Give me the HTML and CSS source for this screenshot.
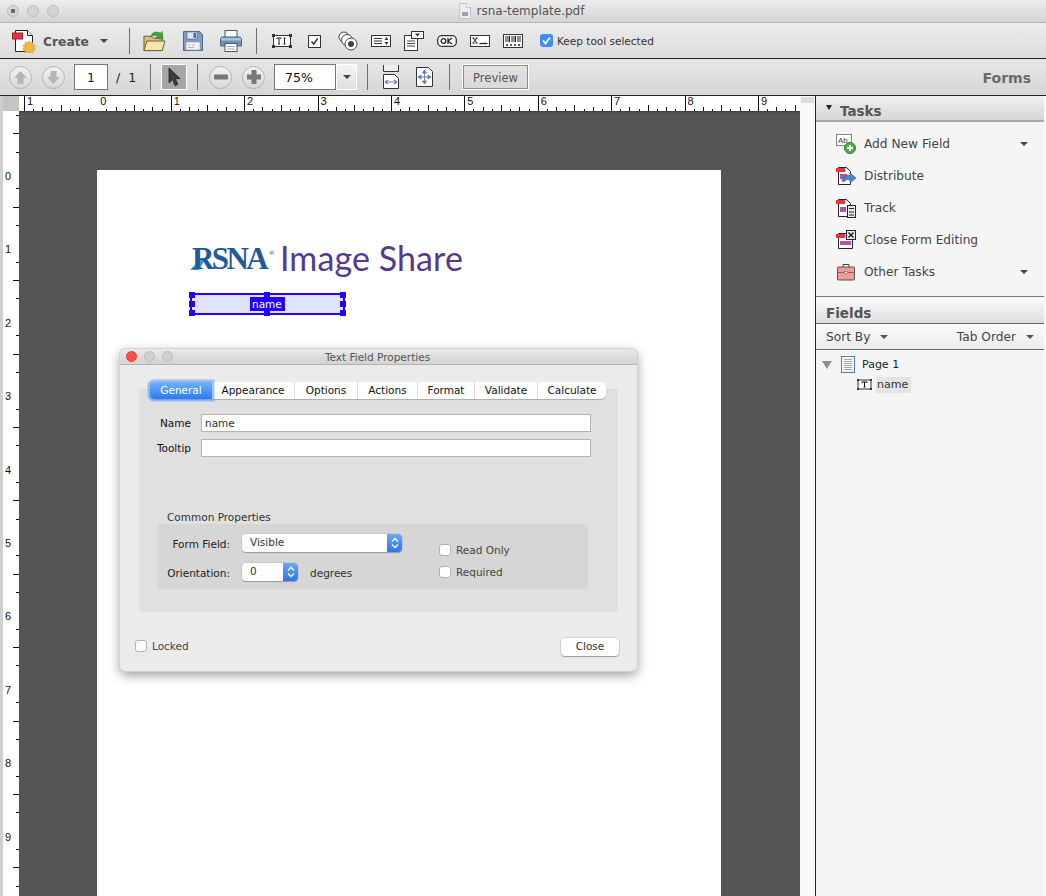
FILE: index.html
```html
<!DOCTYPE html>
<html lang="en">

<head>
    <meta charset="UTF-8">
    <title>rsna-template.pdf</title>
    <link rel="stylesheet" href="styles.css">
</head>

<body>
    <header class="titlebar">
        <div class="lights">
            <span class="light light-active"></span>
            <span class="light"></span>
            <span class="light"></span>
        </div>
        <div class="doc-title">
            <svg width="12" height="16" viewBox="0 0 12 16"><path d="M.5.5h7l4 4v11H.5z" fill="#eee" stroke="#c4c4c4"/><path d="M7.5.5v4h4" fill="#fff" stroke="#c4c4c4"/><rect x="3" y="9" width="6" height="4" fill="#9aa3b8"/></svg>
            <span>rsna-template.pdf</span>
        </div>
        <div class="lights"></div>
    </header>

    <div class="toolbar toolbar-top">
        <svg class="icon-create" width="24" height="24" viewBox="0 0 24 24">
            <path d="M3.5 1.5h12l5 5v16h-17z" fill="#fff" stroke="#222"/>
            <path d="M15.5 1.5v5h5" fill="#eee" stroke="#222"/>
            <rect x="0.5" y="4" width="10" height="6" fill="#e8343f" stroke="#a51c25"/>
            <path d="M17 12l1.4 2 2.400-.8.2 2.500 2.400.9-1.500 2 1.500 2-2.400.9-.2 2.300-2.400-.8-1.400 1-1.400-1-2.400.8-.2-2.300-2.400-.9 1.500-2-1.500-2 2.400-.9.2-2.500 2.400.8z" fill="#f0b93a" stroke="#b88a1e" stroke-width=".5"/>
        </svg>
        <span class="create-label">Create</span>
        <span class="caret caret-create"></span>
        <span class="sep sep-create"></span>
        <div class="file-tools">
            <svg width="23" height="24" viewBox="0 0 24 24">
                <path d="M1 7h8l2 2h9v13H1z" fill="#d9bf78" stroke="#6b5a2a"/>
                <path d="M1 22l3-10h19l-3 10z" fill="#f3e3ae" stroke="#6b5a2a"/>
                <path d="M8 8c1-5 6-7 10-4l2-2 1 8-8-1 2-2c-2-2-5-1-7 1z" fill="#45a03c" stroke="#2c6e28" stroke-width=".6"/>
            </svg>
            <svg width="20" height="24" viewBox="0 0 20 24">
                <path d="M.5 2.500h16l3 3v16H.500z" fill="#7d9cc4" stroke="#4c6a94"/>
                <rect x="4" y="3" width="10" height="7" fill="#dfe7f2" stroke="#4c6a94" stroke-width=".6"/>
                <rect x="10.500" y="4" width="2.500" height="5" fill="#4c6a94"/>
                <rect x="3" y="13" width="14" height="8" fill="#f3f3f3" stroke="#8a9ab0" stroke-width=".6"/>
                <path d="M5 16h3M9 16h3M5 18.500h6" stroke="#b5b5b5"/>
            </svg>
            <svg width="22" height="24" viewBox="0 0 22 24">
                <rect x="5" y="1.500" width="12" height="8" fill="#fafafa" stroke="#555"/>
                <path d="M3 8h16c2 0 2.500 1 2.500 3v6h-21v-6c0-2 .5-3 2.500-3z" fill="#6f93b8" stroke="#456a90"/>
                <rect x="1" y="9" width="20" height="2.500" fill="#a9c3dc"/>
                <rect x="5" y="14.500" width="12" height="8" fill="#fff" stroke="#555"/>
                <path d="M7 17.500h8M7 20h8" stroke="#aaa"/>
            </svg>
        </div>
        <span class="sep sep-file"></span>
        <div class="form-tools">
            <svg width="20" height="16" viewBox="0 0 20 16"><rect x="1.500" y="2.500" width="17" height="11" fill="#fff" stroke="#333"/><path d="M0 1h3v3H0zM17 1h3v3h-3zM0 12h3v3H0zM17 12h3v3h-3z" fill="#333"/><path d="M5 6V5h4v1M7 5v6M6 11h2M11.500 5h2M11.500 11h2M12.500 5v6" fill="none" stroke="#222"/></svg>
            <svg width="20" height="16" viewBox="0 0 20 16"><rect x="3.500" y="2.500" width="12" height="12" fill="#fff" stroke="#333"/><path d="M6.500 8.500l2.200 2.500 4-5.500" fill="none" stroke="#333" stroke-width="1.500"/></svg>
            <svg width="20" height="20" viewBox="0 0 20 20"><circle cx="6" cy="6" r="5" fill="#fff" stroke="#444"/><circle cx="9" cy="9" r="5.500" fill="#fff" stroke="#444"/><circle cx="13" cy="13" r="6" fill="#fff" stroke="#444"/><circle cx="13" cy="13" r="3" fill="#444"/></svg>
            <svg width="20" height="12" viewBox="0 0 20 12"><rect x=".5" y=".5" width="19" height="11" fill="#fff" stroke="#333"/><path d="M3 3.500h8M3 6h8M3 8.500h8" stroke="#333"/><path d="M15.500 2l2 3h-4zM15.500 10l2-3h-4z" fill="#333"/></svg>
            <svg width="20" height="20" viewBox="0 0 20 20"><rect x=".5" y="4.500" width="13" height="15" fill="#fff" stroke="#333"/><rect x="7.500" y=".5" width="12" height="7" fill="#fff" stroke="#333"/><path d="M11 2.500h5l-2.500 3z" fill="#333"/><path d="M3 10h8M3 12.500h8M3 15h8" stroke="#444"/></svg>
            <svg width="20" height="12" viewBox="0 0 20 12"><rect x=".7" y=".7" width="18.600" height="10.600" rx="4" fill="#fff" stroke="#333" stroke-width="1.300"/><circle cx="6.500" cy="6" r="2.300" fill="none" stroke="#222" stroke-width="1.300"/><path d="M11 3v6M15 3l-4 3 4 3" fill="none" stroke="#222" stroke-width="1.300"/></svg>
            <svg width="20" height="12" viewBox="0 0 20 12"><rect x=".5" y=".5" width="19" height="11" fill="#fff" stroke="#333"/><path d="M3 3l4 5M7 3L3 8M2.500 3h2M5.500 3h2M2.500 8h2M5.500 8h2" stroke="#222"/><path d="M9.500 8.500h8" stroke="#222" stroke-width="1.300"/></svg>
            <svg width="20" height="14" viewBox="0 0 20 14"><rect x=".5" y=".5" width="19" height="13" fill="#fff" stroke="#333"/><path d="M3 2v6M5 2v6M6.500 2v6M9 2v6M11 2v6M12.500 2v6M15 2v6M17 2v6" stroke="#222"/><path d="M3 11h2M7 11h2M11 11h2M15 11h2" stroke="#555" stroke-width="2"/></svg>
        </div>
        <span class="checkbox checkbox-on">
            <svg width="13" height="13" viewBox="0 0 13 13"><path d="M3 6.500l2.500 3 4.500-6" fill="none" stroke="#fff" stroke-width="1.800"/></svg>
        </span>
        <span class="keep-label">Keep tool selected</span>
    </div>

    <div class="toolbar toolbar-nav">
        <span class="round-btn">
            <svg width="15" height="15" viewBox="0 0 15 15"><path d="M7.500 1L14 8h-3.500v6h-6V8H1z" fill="#b5b5b5"/></svg>
        </span>
        <span class="round-btn round-next">
            <svg width="15" height="15" viewBox="0 0 15 15"><path d="M7.500 14L14 7h-3.500V1h-6v6H1z" fill="#b5b5b5"/></svg>
        </span>
        <span class="field page-field">1</span>
        <span class="page-count"><i>/</i>1</span>
        <span class="sep sep-page"></span>
        <span class="select-tool">
            <svg width="14" height="20" viewBox="0 0 14 20"><path d="M2 1v15l3.500-3.500L8 18.500l2.800-1.200-2.500-5.700H13z" fill="#3c3c3c" stroke="#111" stroke-width=".7"/></svg>
        </span>
        <span class="sep sep-tool"></span>
        <span class="round-btn round-zoom">
            <svg width="16" height="16" viewBox="0 0 16 16"><rect x="1" y="5.500" width="14" height="5" rx="1" fill="#777"/></svg>
        </span>
        <span class="round-btn round-next">
            <svg width="16" height="16" viewBox="0 0 16 16"><path d="M5.500 1h5v4.500H15v5h-4.500V15h-5v-4.500H1v-5h4.500z" fill="#777"/></svg>
        </span>
        <div class="zoom-select">
            <span class="field zoom-field">75%</span>
            <span class="zoom-arrow"><span class="caret"></span></span>
        </div>
        <span class="sep sep-zoom"></span>
        <svg class="icon-fit" width="16" height="24" viewBox="0 0 16 24"><path d="M.5 0v6.500h15V0" fill="#eee" stroke="#333"/><path d="M.5 9.500h11l4 4v10H.500z" fill="#fff" stroke="#333"/><path d="M2 17h12M2 17l3-2M2 17l3 2M14 17l-3-2M14 17l-3 2" fill="none" stroke="#6f7fb5" stroke-width="1.200"/></svg>
        <svg class="icon-fit-page" width="17" height="20" viewBox="0 0 17 20"><path d="M.5.500h12l4 4v15H.500z" fill="#fff" stroke="#333"/><path d="M8.500 3v14M2 10h13M8.500 3l-2 3h4zM8.500 17l-2-3h4zM2 10l3-2v4zM15 10l-3-2v4z" fill="#6f7fb5" stroke="#6f7fb5"/></svg>
        <span class="sep sep-fit"></span>
        <span class="preview-btn">Preview</span>
        <span class="mode-label">Forms</span>
    </div>

    <div class="workspace">
        <div class="viewer">
            <div class="ruler-row">
                <span class="ruler-gutter"></span>
                <span class="ruler-corner"></span>
                <svg id="ruler-h" class="ruler-h" width="781" height="15"></svg>
            </div>
            <div class="viewer-body">
                <span class="ruler-gutter"></span>
                <svg id="ruler-v" class="ruler-v" width="16" height="785"></svg>
                <div class="canvas">
                    <div class="page">
                        <div class="logo">
                            <div class="logo-rsna">
                                <svg class="logo-wedge" width="18" height="14" viewBox="0 0 18 14"><path d="M0 13L12 1h4L9 13z" fill="#3a9ad0"/></svg>
                                <span class="logo-letters">RSNA</span><sup>®</sup>
                            </div>
                            <span class="logo-name">Image Share</span>
                        </div>
                        <div class="form-field">
                            <span class="form-field-name">name</span>
                            <i class="handle h-tl"></i><i class="handle h-tc"></i><i class="handle h-tr"></i>
                            <i class="handle h-ml"></i><i class="handle h-mr"></i>
                            <i class="handle h-bl"></i><i class="handle h-bc"></i><i class="handle h-br"></i>
                        </div>

                        <div class="dialog">
                            <div class="dialog-title">
                                <div class="dialog-lights">
                                    <span class="dot dot-red"></span>
                                    <span class="dot"></span>
                                    <span class="dot"></span>
                                </div>
                                <span class="dialog-name">Text Field Properties</span>
                            </div>
                            <div class="tabs">
                                <span class="tab tab-active">General</span>
                                <span class="tab">Appearance</span>
                                <span class="tab">Options</span>
                                <span class="tab">Actions</span>
                                <span class="tab">Format</span>
                                <span class="tab">Validate</span>
                                <span class="tab">Calculate</span>
                            </div>
                            <div class="tab-panel">
                                <div class="text-row">
                                    <label>Name</label>
                                    <span class="text-input">name</span>
                                </div>
                                <div class="text-row">
                                    <label>Tooltip</label>
                                    <span class="text-input"></span>
                                </div>
                                <div class="group-title">Common Properties</div>
                                <div class="group">
                                    <div class="group-left">
                                        <div class="group-row">
                                            <label>Form Field:</label>
                                            <span class="popup popup-wide">Visible<span class="stepper"><svg width="8" height="12" viewBox="0 0 8 12"><path d="M1 4.500L4 1.500l3 3M1 7.500l3 3 3-3" fill="none" stroke="#fff" stroke-width="1.300"/></svg></span></span>
                                        </div>
                                        <div class="group-row">
                                            <label>Orientation:</label>
                                            <span class="popup popup-small">0<span class="stepper"><svg width="8" height="12" viewBox="0 0 8 12"><path d="M1 4.500L4 1.500l3 3M1 7.500l3 3 3-3" fill="none" stroke="#fff" stroke-width="1.300"/></svg></span></span>
                                            <span class="unit">degrees</span>
                                        </div>
                                    </div>
                                    <div class="group-right">
                                        <div class="check-row"><span class="checkbox"></span>Read Only</div>
                                        <div class="check-row"><span class="checkbox"></span>Required</div>
                                    </div>
                                </div>
                            </div>
                            <div class="dialog-foot">
                                <div class="check-row"><span class="checkbox"></span>Locked</div>
                                <span class="close-btn">Close</span>
                            </div>
                        </div>
                    </div>
                </div>
            </div>
        </div>
        <div class="scrollbar"><span class="scroll-cap"></span></div>

        <aside class="panel">
            <div class="panel-head"><span class="tri"></span>Tasks</div>
            <ul class="task-list">
                <li>
                    <svg width="20" height="20" viewBox="0 0 20 20"><rect x=".5" y=".5" width="15" height="11" fill="#fff" stroke="#888"/><text x="2" y="9" class="icon-text">Ab</text><circle cx="14" cy="14" r="5.500" fill="#4fb04a" stroke="#2f7d2c"/><path d="M14 11v6M11 14h6" stroke="#fff" stroke-width="2"/></svg>
                    <span>Add New Field</span><span class="caret task-caret"></span>
                </li>
                <li>
                    <svg width="20" height="20" viewBox="0 0 20 20"><path d="M2.500 1.500h8l4 4v13h-12z" fill="#fff" stroke="#222"/><rect y="2" width="9" height="4" fill="#e8343f"/><rect x="4" y="8" width="7" height="5" fill="#c0509c"/><path d="M6 15c0-4 4-6.500 8-5.500V7l6 5-6 5v-3c-3-1-5 0-6 2z" fill="#4c82c8" stroke="#2c5a98" stroke-width=".6"/></svg>
                    <span>Distribute</span>
                </li>
                <li>
                    <svg width="20" height="20" viewBox="0 0 20 20"><path d="M2.500 1.500h8l4 4v13h-12z" fill="#fff" stroke="#222"/><rect y="2" width="9" height="4" fill="#e8343f"/><rect x="4" y="9" width="6" height="5" fill="#c0509c"/><rect x="11.500" y="7.500" width="8" height="12" fill="#e8e8e8" stroke="#222"/><path d="M13 10.500h5M13 14h5M13 17h5" stroke="#222"/></svg>
                    <span>Track</span>
                </li>
                <li>
                    <svg width="20" height="20" viewBox="0 0 20 20"><path d="M2.500 3.500h14v15h-14z" fill="#fff" stroke="#222"/><rect y="4" width="9" height="4" fill="#e8343f"/><rect x="4" y="11" width="11" height="4" fill="#c0509c"/><rect x="10.500" y=".5" width="9" height="9" fill="#eee" stroke="#222"/><path d="M12.500 2.500l5 5M17.500 2.500l-5 5" stroke="#222" stroke-width="1.500"/></svg>
                    <span>Close Form Editing</span>
                </li>
                <li>
                    <svg width="20" height="20" viewBox="0 0 20 20"><path d="M7 5V2.500h6V5" fill="none" stroke="#444"/><rect x="1.500" y="5" width="17" height="13" rx="1" fill="#ec9b9b" stroke="#555"/><path d="M2 10.500h16" stroke="#a85858"/><rect x="8.500" y="9.500" width="3" height="2" fill="#fff" stroke="#555" stroke-width=".5"/></svg>
                    <span>Other Tasks</span><span class="caret task-caret"></span>
                </li>
            </ul>
            <div class="panel-head panel-head-fields">Fields</div>
            <div class="sort-row">
                <span>Sort By</span><span class="caret sort-caret"></span>
                <span class="tab-order">Tab Order</span><span class="caret sort-caret"></span>
            </div>
            <div class="tree">
                <div class="tree-row">
                    <span class="tree-tri"></span>
                    <svg width="14" height="17" viewBox="0 0 14 17"><rect x=".5" y=".5" width="13" height="16" fill="#f4f6fa" stroke="#4f7fb5"/><path d="M3 3.500h8M3 5.500h8M3 7.500h8M3 9.500h8M3 11.500h8M3 13.500h8" stroke="#a8a8a8"/></svg>
                    <span class="tree-page">Page 1</span>
                </div>
                <div class="tree-row tree-child">
                    <svg width="15" height="11" viewBox="0 0 15 11"><rect x="1" y="1" width="13" height="9" fill="#fff" stroke="#333"/><path d="M0 0h2v2H0zM13 0h2v2h-2zM0 9h2v2H0zM13 9h2v2h-2z" fill="#333"/><path d="M5 4V3h5v1M7.500 3v5M6.500 8h2" fill="none" stroke="#111"/></svg>
                    <span class="tree-name">name</span>
                </div>
            </div>
        </aside>
    </div>
    <script src="ruler.js"></script>
</body>

</html>
```

FILE: styles.css
```css
* {
    margin: 0;
    padding: 0;
    box-sizing: border-box;
}

html,
body {
    width: 1046px;
    height: 896px;
    overflow: hidden;
}

body {
    background-color: #fafafa;
    font-family: "DejaVu Sans", sans-serif;
    font-size: 11px;
    color: #222;
}

svg {
    display: block;
    flex: none;
}

/* window title */

.titlebar {
    height: 23px;
    display: flex;
    align-items: center;
    background: linear-gradient(#ededed, #d4d4d4);
    border-bottom: 1px solid #b4b4b4;
}

.lights {
    width: 120px;
    display: flex;
    gap: 8px;
    padding-left: 7px;
}

.light {
    width: 12px;
    height: 12px;
    border-radius: 50%;
    background: #d4d4d4;
    border: 1px solid #bcbcbc;
}

.light-active {
    background: radial-gradient(circle, #666 0 2px, #d4d4d4 2.5px);
}

.doc-title {
    flex: 1;
    display: flex;
    justify-content: center;
    align-items: center;
    gap: 6px;
    font-size: 12px;
    color: #555;
    padding-right: 3px;
}

/* toolbars */

.toolbar {
    display: flex;
    align-items: center;
    border-bottom: 1px solid #222;
}

.toolbar-top {
    height: 36px;
    padding-left: 12px;
    background: linear-gradient(#ececec, #dcdcdc);
}

.toolbar-nav {
    height: 37px;
    padding-left: 9px;
    background: linear-gradient(#e6e6e6, #d6d6d6);
}

.sep {
    width: 1px;
    height: 26px;
    background: #6e6e6e;
    flex: none;
}

.create-label {
    width: 46px;
    margin-left: 7px;
    padding-top: 3px;
    font-size: 12.3px;
    font-weight: bold;
    white-space: nowrap;
    color: #555;
}

.caret {
    display: inline-block;
    width: 0;
    height: 0;
    flex: none;
    border-left: 4px solid transparent;
    border-right: 4px solid transparent;
    border-top: 4px solid #444;
}

.caret-create {
    margin-left: 11px;
}

.sep-create {
    margin-left: 21px;
}

.file-tools {
    display: flex;
    align-items: center;
    gap: 17px;
    margin-left: 13px;
}

.sep-file {
    margin-left: 14px;
}

.form-tools {
    display: flex;
    align-items: center;
    gap: 13px;
    margin-left: 15px;
}

.checkbox {
    width: 13px;
    height: 13px;
    flex: none;
    display: inline-block;
    background: #fff;
    border: 1px solid #b2b2b2;
    border-radius: 3px;
}

.checkbox-on {
    margin-left: 17px;
    background: #3f8cf3;
    border: none;
}

.keep-label {
    margin-left: 4px;
    font-size: 10.5px;
    color: #333;
}

.round-btn {
    width: 23px;
    height: 23px;
    flex: none;
    display: flex;
    align-items: center;
    justify-content: center;
    border-radius: 50%;
    border: 1px solid #b4b4b4;
    background: linear-gradient(#f2f2f2, #d8d8d8);
}

.round-next {
    margin-left: 10px;
}

.round-zoom {
    margin-left: 11px;
}

.field {
    display: flex;
    align-items: center;
    justify-content: center;
    height: 26px;
    background: #fff;
    border: 1px solid #777;
    outline: 1px solid #fff;
    outline-offset: -2px;
    font-size: 12.5px;
    color: #111;
}

.page-field {
    width: 34px;
    margin-left: 9px;
}

.page-count {
    width: 42px;
    flex: none;
    font-size: 12.5px;
    color: #222;
    padding-left: 8px;
}

.page-count i {
    font-style: normal;
    margin-right: 8px;
}

.select-tool {
    width: 26px;
    height: 26px;
    margin-left: 10px;
    display: flex;
    align-items: center;
    justify-content: center;
    background: #a6a6a6;
    border: 1px solid #fff;
}

.sep-tool {
    margin-left: 10px;
}

.zoom-select {
    display: flex;
    margin-left: 9px;
    flex: none;
}

.zoom-field {
    width: 62px;
    padding-right: 12px;
}

.zoom-arrow {
    width: 21px;
    height: 26px;
    display: flex;
    align-items: center;
    justify-content: center;
    background: linear-gradient(#f4f4f4, #dedede);
    border: 1px solid #fff;
}

.sep-zoom {
    margin-left: 10px;
}

.icon-fit {
    margin-left: 15px;
}

.icon-fit-page {
    margin-left: 17px;
}

.sep-fit {
    margin-left: 16px;
}

.sep-page {
    margin-left: 0;
}

.preview-btn {
    width: 67px;
    height: 26px;
    margin-left: 12px;
    padding-top: 1px;
    display: flex;
    align-items: center;
    justify-content: center;
    font-size: 11.5px;
    color: #555;
    border: 1px solid #fff;
    box-shadow: inset 0 0 0 1px #8c8c8c;
}

.mode-label {
    margin-left: auto;
    padding: 2px 15px 0 0;
    font-size: 14px;
    font-weight: bold;
    color: #6a6a6a;
}

/* document area */

.workspace {
    height: 800px;
    display: flex;
}

.viewer {
    width: 800px;
    display: flex;
    flex-direction: column;
}

.ruler-row {
    height: 15px;
    display: flex;
    flex: none;
}

.ruler-gutter {
    width: 3px;
    flex: none;
    background: #cfcfcf;
}

.ruler-corner {
    width: 16px;
    background: #c4c4c4;
}

.ruler-h,
.ruler-v {
    background: #fff;
}

.ruler-h line,
.ruler-v line {
    stroke: #111;
    shape-rendering: crispEdges;
}

.ruler-h text,
.ruler-v text {
    font-family: "Liberation Sans", sans-serif;
    font-size: 11px;
    fill: #111;
}

.viewer-body {
    flex: 1;
    min-height: 0;
    display: flex;
}

.canvas {
    flex: 1;
    overflow: hidden;
    background: #555;
    box-shadow: inset 0 2px 2px -1px rgba(0, 0, 0, 0.35);
    padding: 59px 0 0 78px;
}

.page {
    position: relative;
    width: 624px;
    height: 900px;
    background: #fff;
    padding: 73px 0 0 93px;
}

.logo {
    height: 36px;
    display: flex;
    align-items: flex-start;
}

.logo-rsna {
    position: relative;
    width: 90px;
    margin-top: 1px;
    padding-left: 2px;
    line-height: 30px;
    font-family: "Liberation Serif", serif;
    font-size: 31px;
    font-weight: bold;
    letter-spacing: -2.6px;
    color: #1f5a9a;
}

.logo-letters {
    position: relative;
}

.logo-rsna sup {
    position: absolute;
    top: -6px;
    left: 79px;
    font-size: 7px;
    letter-spacing: 0;
}

.logo-wedge {
    position: absolute;
    left: 0;
    top: 13px;
}

.logo-name {
    font-family: "Lato", sans-serif;
    font-size: 34px;
    line-height: 30px;
    letter-spacing: .1px;
    color: #56398f;
    white-space: nowrap;
}

.form-field {
    position: relative;
    width: 155px;
    height: 22px;
    margin-top: 14px;
    display: flex;
    align-items: center;
    justify-content: center;
    background: #dfe3fb;
    border: 2px solid #2600ff;
    font-size: 10.5px;
}

.form-field-name {
    width: 35px;
    height: 14px;
    line-height: 14px;
    padding-left: 2px;
    background: #2600ff;
    color: #fff;
}

.handle {
    position: absolute;
    width: 6px;
    height: 6px;
    background: #2600ff;
}

.h-tl, .h-tc, .h-tr { top: -3px; }
.h-ml, .h-mr { top: 6px; }
.h-bl, .h-bc, .h-br { bottom: -3px; }
.h-tl, .h-ml, .h-bl { left: -3px; }
.h-tc, .h-bc { left: 72px; }
.h-tr, .h-mr, .h-br { right: -3px; }

/* properties dialog */

.dialog {
    position: absolute;
    left: 23px;
    top: 179px;
    width: 517px;
    height: 322px;
    background: #ebebeb;
    border-radius: 5px;
    box-shadow: 0 0 0 1px #d2d2d2, 0 4px 12px rgba(0, 0, 0, 0.4);
    font-size: 10.5px;
}

.dialog-title {
    position: relative;
    height: 16px;
    display: flex;
    align-items: center;
    justify-content: center;
    background: linear-gradient(#e9e9e9, #d2d2d2);
    border-bottom: 1px solid #b4b4b4;
    border-radius: 5px 5px 0 0;
    color: #555;
}

.dialog-name {
    padding: 1px 2px 0 0;
}

.dialog-lights {
    position: absolute;
    left: 6px;
    top: 2px;
    display: flex;
    gap: 7px;
}

.dot {
    width: 11px;
    height: 11px;
    border-radius: 50%;
    background: #d0d0d0;
    border: 1px solid #bdbdbd;
}

.dot-red {
    background: #fc4e4b;
    border-color: #e0403c;
}

.tabs {
    position: relative;
    z-index: 1;
    display: grid;
    grid-template-columns: 62px 82px 63px 60px 57px 63px 69px;
    width: fit-content;
    height: 17px;
    margin: 17px 0 0 30px;
    background: #fff;
    border-radius: 5px;
    box-shadow: 0 1px 1px #aaa;
}

.tab {
    display: flex;
    align-items: center;
    justify-content: center;
    padding-bottom: 2px;
    color: #111;
    border-left: 1px solid #dcdcdc;
}

.tab-active {
    color: #fff;
    border: none;
    border-radius: 4px 0 0 4px;
    background: linear-gradient(#6fb1fb, #2b7bf5);
    box-shadow: 0 0 0 2.5px rgba(86, 150, 245, 0.55);
}

.tab-active + .tab {
    border-left: none;
}

.tab-panel {
    height: 223px;
    margin: -10px 19px 0;
    padding-top: 24px;
    background: #e0e0e0;
    border-radius: 3px;
    border-top: 1px solid #d8d8d8;
}

.text-row {
    display: flex;
    align-items: center;
    gap: 10px;
    height: 18px;
    margin-bottom: 7px;
}

.text-row label {
    width: 52px;
    text-align: right;
    color: #111;
    white-space: nowrap;
}

.text-input {
    width: 390px;
    height: 18px;
    line-height: 17px;
    padding-left: 3px;
    background: #fff;
    border: 1px solid #b4b4b4;
    color: #333;
}

.group-title {
    height: 14px;
    margin: 53px 0 0 28px;
    line-height: 14px;
    color: #333;
}

.group {
    display: flex;
    width: 431px;
    height: 65px;
    margin: 0 0 0 18px;
    padding-top: 10px;
    background: #d6d6d6;
    border-radius: 3px;
}

.group-left {
    width: 282px;
    display: flex;
    flex-direction: column;
    gap: 11px;
}

.group-row {
    height: 18px;
    display: flex;
    align-items: center;
}

.group-row label {
    width: 73px;
    padding-top: 2px;
    text-align: right;
    margin-right: 12px;
    color: #222;
    white-space: nowrap;
}

.popup {
    position: relative;
    height: 18px;
    line-height: 17px;
    padding-left: 8px;
    background: #fff;
    border-radius: 4px;
    box-shadow: 0 1px 1px #999, 0 0 0 .5px #bbb;
    color: #333;
}

.popup-wide {
    width: 160px;
}

.popup-small {
    width: 56px;
}

.stepper {
    position: absolute;
    right: 0;
    top: 0;
    width: 15px;
    height: 18px;
    display: flex;
    align-items: center;
    justify-content: center;
    border-radius: 0 4px 4px 0;
    background: linear-gradient(#6aa8f8, #2f74ea);
}

.unit {
    margin-left: 12px;
    padding-top: 2px;
    color: #333;
}

.group-right {
    display: flex;
    flex-direction: column;
    gap: 9px;
    padding-top: 9px;
}

.check-row {
    display: flex;
    align-items: center;
    gap: 5px;
    height: 13px;
    color: #444;
    white-space: nowrap;
}

.check-row .checkbox {
    width: 12px;
    height: 12px;
}

.dialog-foot {
    display: flex;
    align-items: center;
    justify-content: space-between;
    margin-top: 26px;
    padding: 0 18px 0 15px;
}

.dialog-foot .check-row {
    margin-bottom: 2px;
}

.close-btn {
    width: 58px;
    height: 18px;
    line-height: 17px;
    text-align: center;
    background: #fff;
    border-radius: 4px;
    box-shadow: 0 1px 1px #999, 0 0 0 .5px #bbb;
    color: #333;
}

/* side panel */

.scrollbar {
    width: 15px;
    flex: none;
    padding: 1px 1px 0;
    background: #f9f9f9;
}

.scroll-cap {
    display: block;
    height: 6px;
    background: #dcdcdc;
}

.panel {
    width: 229px;
    flex: none;
    background: #f5f5f5;
    border-left: 1px solid #222;
    display: flex;
    flex-direction: column;
    color: #444;
    font-size: 12.2px;
}

.panel-head {
    height: 26px;
    flex: none;
    display: flex;
    align-items: center;
    gap: 8px;
    padding: 5px 0 0 10px;
    background: linear-gradient(#f0f0f0, #d6d6d6);
    border-bottom: 2px solid #aaa;
    font-size: 13.5px;
    font-weight: bold;
    color: #555;
}

.panel-head-fields {
    height: 27px;
    background: linear-gradient(#fbfbfb, #dedede);
    border-bottom: 1px solid #666;
}

.tri {
    width: 0;
    height: 0;
    border-left: 3.5px solid transparent;
    border-right: 3.5px solid transparent;
    border-top: 5px solid #222;
    margin-top: -6px;
}

.task-list {
    list-style: none;
    height: 175px;
    flex: none;
    padding: 6px 0 0 20px;
    border-bottom: 1px solid #777;
}

.task-list li {
    height: 32px;
    display: flex;
    align-items: center;
    gap: 8px;
}

.icon-text {
    font-family: "Liberation Sans", sans-serif;
    font-size: 8px;
    fill: #444;
}

.task-caret {
    margin: 0 16px 0 auto;
}

.sort-row {
    height: 26px;
    flex: none;
    display: flex;
    align-items: center;
    padding: 1px 0 0 10px;
    background: linear-gradient(#fafafa, #ececec);
    border-bottom: 1px solid #666;
}

.sort-caret {
    margin-left: 10px;
    border-top-color: #555;
}

.tab-order {
    margin-left: auto;
}

.sort-row .sort-caret:last-child {
    margin-right: 10px;
}

.tree {
    padding: 6px 0 0 6px;
}

.tree-row {
    height: 17px;
    display: flex;
    align-items: center;
}

.tree-tri {
    width: 0;
    height: 0;
    border-left: 5px solid transparent;
    border-right: 5px solid transparent;
    border-top: 8px solid #8e8e8e;
    margin-right: 9px;
}

.tree-page {
    margin-left: 7px;
    font-size: 11px;
    color: #222;
}

.tree-child {
    margin-top: 3px;
    padding-left: 35px;
    gap: 4px;
}

.tree-name {
    width: 35px;
    height: 16px;
    line-height: 16px;
    padding-left: 1px;
    background: #e4e4e4;
    font-size: 11px;
    color: #333;
}
```

FILE: ruler.js
```js
// ruler ticks are drawn here, one inch is 73.4px on screen
const SVG_NS = 'http://www.w3.org/2000/svg';
const INCH = 73.4;

function addLine(svg, x1, y1, x2, y2) {
    const line = document.createElementNS(SVG_NS, 'line');
    line.setAttribute('x1', x1);
    line.setAttribute('y1', y1);
    line.setAttribute('x2', x2);
    line.setAttribute('y2', y2);
    svg.appendChild(line);
}

function addLabel(svg, x, y, value) {
    const text = document.createElementNS(SVG_NS, 'text');
    text.setAttribute('x', x);
    text.setAttribute('y', y);
    text.textContent = value;
    svg.appendChild(text);
}

function drawHorizontal() {
    const svg = document.getElementById('ruler-h');
    const zero = 78.3;

    for (let i = -1; i <= 9; i++) {
        const x = zero + i * INCH;
        if (i !== 0) addLine(svg, Math.round(x) + 0.5, 0, Math.round(x) + 0.5, 15);
        addLabel(svg, x + 3, 9, Math.abs(i));

        for (let j = 1; j < 8; j++) {
            const tx = Math.round(x + j * INCH / 8) + 0.5;
            const len = j === 4 ? 6 : j % 2 === 0 ? 4 : 2;
            addLine(svg, tx, 15 - len, tx, 15);
        }
    }
}

function drawVertical() {
    const svg = document.getElementById('ruler-v');
    const zero = 59;

    for (let i = -1; i <= 9; i++) {
        const y = zero + i * INCH;
        if (i >= 0) addLabel(svg, 2, y + 10, i);

        for (let j = 1; j < 4; j++) {
            const ty = Math.round(y + j * INCH / 4) + 0.5;
            addLine(svg, j === 2 ? 10 : 13, ty, 16, ty);
        }
    }
}

drawHorizontal();
drawVertical();
```
